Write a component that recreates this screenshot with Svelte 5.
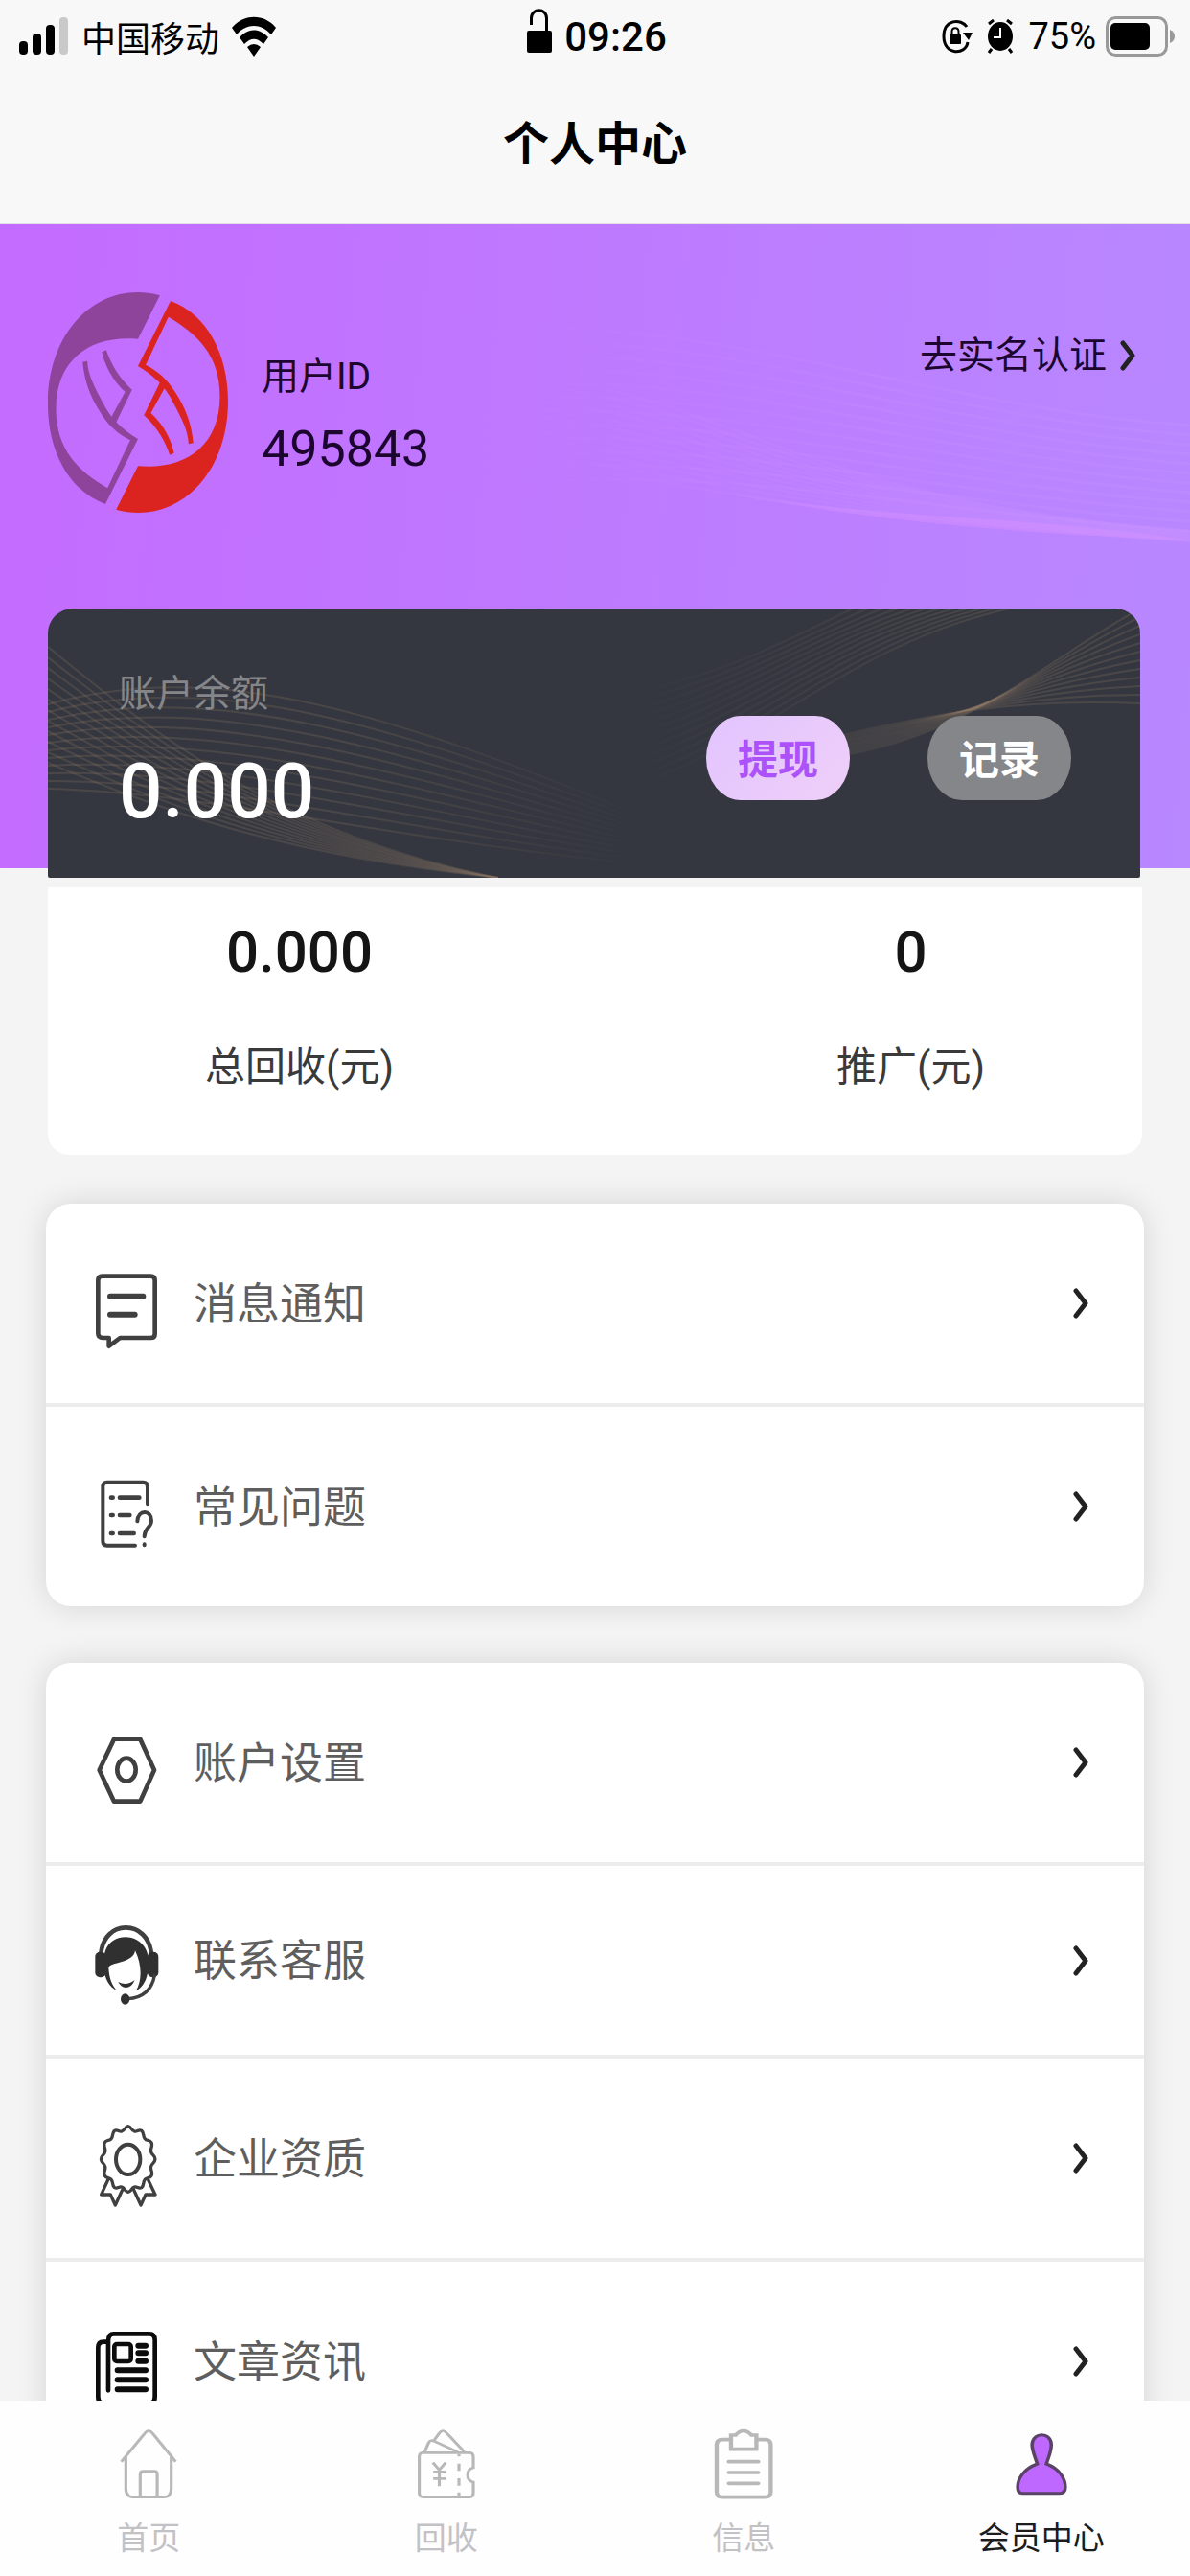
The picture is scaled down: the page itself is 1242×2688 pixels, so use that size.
<script>
	const notices = [
		{ icon: 'message', label: '消息通知', box: '174 252 204 264' },
		{ icon: 'faq', label: '常见问题', box: '174 888 204 264' }
	];

	const services = [
		{ icon: 'settings', label: '账户设置', box: '174 249 204 264' },
		{ icon: 'support', label: '联系客服', box: '174 866 204 264', compact: true },
		{ icon: 'badge', label: '企业资质', box: '174 286 204 264' },
		{ icon: 'news', label: '文章资讯', box: '174 921 204 264' }
	];

	const tabs = [
		{ icon: 'home', label: '首页', box: '315 135 152 216' },
		{ icon: 'ticket', label: '回收', box: '1101 135 152 216' },
		{ icon: 'list', label: '信息', box: '315 135 152 216' },
		{ icon: 'user', label: '会员中心', box: '1101 135 152 216' }
	];

	let active = $state('user');

	const lines = Array.from({ length: 12 }, (_, i) => i);

	// twelve bumps round an ellipse
	function scallop(cx, cy, rx, ry) {
		const at = (deg, r) => {
			const a = (deg * Math.PI) / 180;
			return `${(cx + Math.sin(a) * rx * r).toFixed(1)} ${(cy - Math.cos(a) * ry * r).toFixed(1)}`;
		};
		let d = `M${at(-15, 0.93)}`;
		for (let k = 0; k < 12; k++) {
			d += `C${at(k * 30 - 8, 0.93)} ${at(k * 30 - 7, 1.06)} ${at(k * 30, 1.06)}`;
			d += `C${at(k * 30 + 7, 1.06)} ${at(k * 30 + 8, 0.93)} ${at(k * 30 + 15, 0.93)}`;
		}
		return d + 'Z';
	}
</script>

{#snippet chevron()}
	<svg class="chevron" viewBox="0 0 16 32" aria-hidden="true">
		<path d="M3 3L13 16L3 29" />
	</svg>
{/snippet}

{#snippet menu(items)}
	<nav class="card menu">
		{#each items as item}
			<a href="#{item.icon}" class="row" class:compact={item.compact}>
				<svg class="row-icon" viewBox={item.box} aria-hidden="true">
					{#if item.icon === 'message'}
						<path class="line w14" d="M200 275H352Q365 275 365 288V455Q365 468 352 468H256L221 494V468H202Q187 468 187 453V288Q187 275 200 275Z" />
						<path class="line w18" d="M225 338H328M225 395H302" />
					{:else if item.icon === 'faq'}
						<path class="line w12" d="M342 988V936Q342 920 328 920H215Q202 920 202 934V1105Q202 1118 215 1118H303" />
						<path class="line w14" d="M228 968H233M255 968H316M228 1023H233M255 1023H286M228 1080H233M255 1080H299" />
						<path class="line w12" d="M310 1042C312 1005 354 1005 354 1040C354 1062 332 1062 332 1090M332 1114V1117" />
					{:else if item.icon === 'settings'}
						<path class="line w14" d="M237 284H319L363 381L319 479H237L191 381Z" />
						<ellipse class="line w14" cx="276" cy="380" rx="29" ry="36" />
					{:else if item.icon === 'support'}
						<path class="line w14" d="M196 955C202 842 346 842 354 955" />
						<rect x="178" y="946" width="34" height="80" rx="15" />
						<rect x="342" y="946" width="34" height="80" rx="15" />
						<path d="M206 965C208 878 336 878 344 965V1000C340 1035 328 1055 306 1068C324 1038 326 990 303 942C300 982 222 978 220 996C222 1030 230 1050 246 1068C222 1055 208 1030 206 1000Z" />
						<path d="M250 1040Q276 1054 302 1034Q292 1058 274 1058Q258 1057 250 1040Z" />
						<path class="line w10" d="M364 1020C355 1068 325 1090 280 1093" />
						<ellipse cx="272" cy="1094" rx="14" ry="17" />
					{:else if item.icon === 'badge'}
						<path class="line w10" d={scallop(281, 397, 80, 97)} />
						<ellipse class="line w12" cx="281" cy="398" rx="38" ry="47" />
						<path class="line w10" d="M219 460L197 508H226L241 541L264 491M343 460L366 508H336L321 541L298 491" />
					{:else if item.icon === 'news'}
						<g class="dark">
							<path class="line w14" d="M219 1120V965Q219 943 236 943H348Q365 943 365 962V1140Q365 1160 348 1160H204Q187 1160 187 1140V986Q187 968 204 968H215" />
							<rect class="line w14" x="238" y="975" width="52" height="54" rx="8" />
							<path class="line w18" d="M313 980H336M313 1003H336M313 1028H336M248 1057H336M248 1087H336M248 1117H336" />
						</g>
					{/if}
				</svg>
				<span>{item.label}</span>
				{@render chevron()}
			</a>
		{/each}
	</nav>
{/snippet}

<div class="app">
	<header>
		<div class="status">
			<div class="group">
				<svg class="signal" viewBox="0 0 52 42" aria-hidden="true">
					<rect x="0" y="26" width="9" height="14" rx="4" />
					<rect x="14" y="18" width="9" height="22" rx="4" />
					<rect x="28" y="9" width="9" height="31" rx="4" />
					<rect class="off" x="42" y="1" width="9" height="39" rx="4" />
				</svg>
				<span>中国移动</span>
				<svg class="wifi" viewBox="0 0 46 42" aria-hidden="true">
					<path d="M0 12C12 -3 34 -3 46 12L41 19C30 7 16 7 5 19Z" />
					<path d="M8 22C17 12 29 12 38 22L33 29C26 22 20 22 13 29Z" />
					<path d="M16 32Q23 26 30 32L23 42Z" />
				</svg>
			</div>
			<div class="group clock">
				<svg class="unlock" viewBox="0 0 26 46" aria-hidden="true">
					<rect x="0" y="23" width="26" height="23" rx="2" />
					<path d="M4.500 17V10C4.500 -1 20.500 -1 20.500 10V24" />
				</svg>
				<time>09:26</time>
			</div>
			<div class="group end">
				<svg class="rotation" viewBox="0 0 32 36" aria-hidden="true">
					<path class="ring" d="M26 8C20 -1 2 0 2 18C2 38 25 38 27 24" />
					<path d="M22 14H32L28 22Z" />
					<rect x="8" y="16" width="12" height="10" rx="1" />
					<path class="shackle" d="M10.500 17V13C10.500 8 17.500 8 17.500 13V17" />
				</svg>
				<svg class="alarm" viewBox="0 0 28 36" aria-hidden="true">
					<ellipse cx="14" cy="18" rx="13" ry="15" />
					<path class="legs" d="M2 5L7 1M26 5L21 1M5 31L2 35M23 31L26 35" />
					<path class="hands" d="M14 9V19H7" />
				</svg>
				<span>75%</span>
				<svg class="battery" viewBox="0 0 72 42" aria-hidden="true">
					<rect class="shell" x="1.500" y="1.500" width="62" height="39" rx="9" />
					<rect x="5" y="7" width="41" height="28" rx="5" />
					<path class="nub" d="M67 14Q72 16 72 21Q72 26 67 28Z" />
				</svg>
			</div>
		</div>
		<h1>个人中心</h1>
	</header>

	<main>
		<section class="hero">
			<svg class="hero-waves" viewBox="0 0 1242 672" preserveAspectRatio="none" aria-hidden="true">
				<path class="glow" d="M700 270C900 310 1050 300 1242 330C1050 322 900 310 700 270Z" />
				{#each lines as i}
					<path d="M480 {110 + i * 15}C740 {90 + i * 14} 960 {190 + i * 10} 1242 {210 + i * 10}" />
					<path d="M560 {160 + i * 8}C760 {180 + i * 9} 840 {290 + i} 1242 {320 + i}" />
				{/each}
			</svg>
			<div class="profile">
				<svg class="avatar" viewBox="112 222 420 696" preserveAspectRatio="none" role="img" aria-label="头像">
					<defs>
						<g id="half">
							<path d="M373 235C240 185 112 330 112 575C112 720 160 845 246 888L322 684C285 655 258 620 240 570C218 515 205 480 204 440L193 443C197 505 212 555 235 602C253 642 275 668 304 688L251 838C185 785 131 720 131 590C131 430 215 358 322 371Z" />
							<path d="M238 412L248 406C258 445 275 490 308 530L270 635L260 615L292 537C262 500 245 455 238 412Z" />
						</g>
					</defs>
					<use href="#half" fill="#8f449b" />
					<use href="#half" fill="#db2420" transform="rotate(180 322 570)" />
				</svg>
				<div class="who">
					<span>用户ID</span>
					<strong>495843</strong>
				</div>
				<a href="#verify" class="verify">去实名认证 {@render chevron()}</a>
			</div>

			<div class="balance">
				<svg class="balance-waves" viewBox="0 0 1140 281" preserveAspectRatio="none" aria-hidden="true">
					<defs>
						<linearGradient id="fade-right" gradientUnits="userSpaceOnUse" x1="0" y1="0" x2="620" y2="0">
							<stop offset="0.5" stop-color="#9a7f68" />
							<stop offset="1" stop-color="#9a7f68" stop-opacity="0" />
						</linearGradient>
						<linearGradient id="fade-left" gradientUnits="userSpaceOnUse" x1="600" y1="0" x2="1000" y2="0">
							<stop offset="0" stop-color="#9a7f68" stop-opacity="0" />
							<stop offset="1" stop-color="#9a7f68" />
						</linearGradient>
					</defs>
					<g stroke="url(#fade-right)">
						{#each lines as i}
							<path d="M0 {100 + i * 8}C180 {50 + i * 13} 360 {110 + i * 12} 640 {225 + i * 4}" />
							<path d="M0 {40 + i * 11}C110 {130 + i * 7} 240 {235 + i * 2} 470 281" />
						{/each}
					</g>
					<g stroke="url(#fade-left)">
						{#each lines as i}
							<path d="M600 {90 + i * 9}C{700 + i * 6} {70 + i * 6} {760 + i * 8} {40 - i * 2} {860 + i * 18} -10" />
							<path d="M760 {160 - i}C{940 - i * 3} {156 - i * 4} {1030 - i * 3} {60 + i * 3} 1140 {i * 9}" />
						{/each}
					</g>
				</svg>
				<div class="amount">
					<span>账户余额</span>
					<strong>0.000</strong>
				</div>
				<div class="actions">
					<button type="button" class="withdraw">提现</button>
					<button type="button">记录</button>
				</div>
			</div>
		</section>

		<dl class="stats">
			<div>
				<dt>总回收(元)</dt>
				<dd>0.000</dd>
			</div>
			<div>
				<dt>推广(元)</dt>
				<dd>0</dd>
			</div>
		</dl>

		{@render menu(notices)}
		{@render menu(services)}
	</main>

	<nav class="tabbar">
		{#each tabs as tab}
			<button type="button" class:active={active === tab.icon} onclick={() => (active = tab.icon)}>
				<svg viewBox={tab.box} preserveAspectRatio="none" aria-hidden="true">
					{#if tab.icon === 'home'}
						<path d="M319 236L380 149Q391 130 403 149L463 236M331 222V320Q331 347 354 347H430Q451 347 451 320V222M369 345V275Q369 266 378 266H406Q414 266 414 275V345" />
					{:else if tab.icon === 'ticket'}
						<path d="M1114 208H1238Q1248 208 1248 222V255Q1233 258 1233 278Q1233 296 1248 300V334Q1248 347 1238 347H1116Q1105 347 1105 334V222Q1105 208 1114 208Z" />
						<path d="M1119 206L1130 176Q1135 166 1145 172L1206 205M1145 168L1158 147Q1167 132 1178 147L1224 205" />
						<path d="M1141 239L1158 262L1175 239M1158 262V313M1142 268H1176M1142 289H1176" />
						<path d="M1210 212V220M1210 242V265M1210 288V311M1210 332V345" />
					{:else if tab.icon === 'list'}
						<g class="thick">
							<path d="M354 167H334Q320 167 320 184V331Q320 347 334 347H448Q463 347 463 331V184Q463 167 448 167H430" />
							<path d="M358 153H370Q391 126 412 153H425V197H358Z" />
							<path d="M352 236H430M352 270H430M352 304H430" />
						</g>
					{:else}
						<path class="person" d="M1166 243C1158 215 1152 200 1152 182C1154 142 1202 142 1203 182C1203 205 1196 220 1190 243C1225 258 1240 290 1240 315Q1240 335 1226 335H1126Q1114 335 1114 315C1114 290 1130 258 1166 243Z" />
					{/if}
				</svg>
				<span>{tab.label}</span>
			</button>
		{/each}
	</nav>
</div>

<style>
	:global(body) {
		background: #f4f4f4;
	}

	.app {
		display: flex;
		flex-direction: column;
		height: 100vh;
		overflow: hidden;
		background: #f4f4f4;
		font-family: Roboto, 'Noto Sans CJK SC', sans-serif;
		color: #111;
	}

	a {
		color: inherit;
		text-decoration: none;
	}

	button {
		border: 0;
		padding: 0;
		background: none;
		font-family: inherit;
		cursor: pointer;
	}

	header {
		flex: none;
		padding-bottom: 7px;
		background: #f8f8f8;
		border-bottom: 1px solid #e2dfe6;
	}

	.status {
		display: grid;
		grid-template-columns: 1fr auto 1fr;
		align-items: center;
		height: 76px;
		padding: 0 16px 0 20px;
		font-size: 36px;
		color: #000;
	}

	.group {
		display: flex;
		align-items: center;
		gap: 13px;
	}
	.clock {
		font-size: 42px;
		font-weight: 500;
	}
	.end {
		justify-content: flex-end;
		gap: 10px;
		font-size: 38px;
	}

	.signal {
		width: 52px;
		height: 42px;
	}
	.off {
		fill: #c9c9c9;
	}
	.wifi {
		width: 46px;
		height: 42px;
	}
	.unlock {
		width: 26px;
		height: 46px;
		margin-bottom: 12px;
	}
	.unlock path,
	.ring,
	.shackle,
	.legs {
		fill: none;
		stroke: #000;
		stroke-width: 3;
	}
	.shackle {
		stroke-width: 2;
	}
	.rotation {
		width: 32px;
		height: 36px;
	}
	.alarm {
		width: 28px;
		height: 36px;
		margin: 0 5px;
	}
	.hands {
		fill: none;
		stroke: #fff;
		stroke-width: 2;
	}
	.battery {
		width: 72px;
		height: 42px;
	}
	.shell {
		fill: none;
		stroke: #999;
		stroke-width: 3;
	}
	.nub {
		fill: #999;
	}

	h1 {
		margin: 0;
		font-size: 48px;
		font-weight: 700;
		line-height: 150px;
		text-align: center;
		color: #000;
	}

	main {
		flex: 1;
		min-height: 0;
		overflow-y: auto;
		scrollbar-width: none;
	}

	.hero {
		position: relative;
		display: flex;
		flex-direction: column;
		gap: 99px;
		padding: 70px 52px 0 50px;
		background: linear-gradient(95deg, #c46bff, #be7aff 50%, #b888ff);
	}

	.hero-waves,
	.balance-waves {
		position: absolute;
		inset: 0;
		width: 100%;
		height: 100%;
		fill: none;
	}
	.hero-waves {
		stroke: #d39cff;
		stroke-opacity: 0.14;
		stroke-width: 3;
		mask-image: linear-gradient(90deg, transparent 40%, #000 75%);
	}
	.glow {
		fill: #d08cff;
		fill-opacity: 0.6;
		stroke: none;
	}

	.profile {
		position: relative;
		display: flex;
		align-items: flex-start;
		font-size: 39px;
		line-height: 76px;
		color: #1c0630;
	}

	.avatar {
		width: 188px;
		height: 232px;
	}

	.who {
		display: flex;
		flex-direction: column;
		flex: 1;
		padding: 51px 0 0 35px;
	}
	.who strong {
		font-size: 52px;
		font-weight: 400;
	}

	.verify {
		display: flex;
		align-items: center;
		gap: 14px;
		padding: 29px 5px 0 0;
	}

	.chevron {
		width: 16px;
		height: 32px;
		fill: none;
		stroke: #222;
		stroke-width: 5;
		stroke-linecap: round;
		stroke-linejoin: round;
	}

	.balance {
		position: relative;
		display: flex;
		justify-content: space-between;
		align-items: center;
		margin-bottom: -10px;
		padding: 64px 72px 45px 74px;
		border-radius: 26px 26px 2px 2px;
		background: #34373f;
		overflow: hidden;
	}
	.balance-waves {
		stroke-opacity: 0.22;
		stroke-width: 2;
	}

	.amount {
		position: relative;
		display: flex;
		flex-direction: column;
		gap: 32px;
		font-size: 39px;
		line-height: 50px;
		color: #85868a;
	}
	.amount strong {
		font-size: 80px;
		font-weight: 500;
		line-height: 90px;
		color: #fff;
	}

	.actions {
		position: relative;
		display: flex;
		gap: 81px;
		margin-top: 12px;
	}
	.actions button {
		width: 150px;
		height: 88px;
		padding-bottom: 4px;
		border-radius: 36px / 44px;
		background: #85868a;
		font-size: 42px;
		font-weight: 700;
		color: #fff;
	}
	.actions .withdraw {
		background: linear-gradient(135deg, #e2c4ff, #efcff8);
		color: #ad52fa;
	}

	.stats {
		display: flex;
		justify-content: space-between;
		margin: 20px 50px 0;
		padding: 33px 164px 56px;
		border-radius: 0 0 22px 22px;
		background: #fff;
		text-align: center;
	}
	.stats div {
		display: flex;
		flex-direction: column-reverse;
		gap: 50px;
	}
	.stats dt {
		font-size: 42px;
		line-height: 70px;
		color: #3a3a3a;
	}
	.stats dd {
		margin: 0;
		font-size: 60px;
		font-weight: 500;
		line-height: 70px;
		color: #151515;
	}

	.menu {
		margin: 51px 48px 0;
		border-radius: 26px;
		background: #fff;
		box-shadow: 0 0 32px rgba(0, 0, 0, 0.13);
	}
	.menu + .menu {
		margin-top: 59px;
	}

	.row {
		display: flex;
		align-items: center;
		height: 208px;
		padding: 0 58px 0 50px;
		font-size: 45px;
		color: #5e5e5e;
	}
	.row + .row {
		border-top: 4px solid #ededed;
	}
	.row.compact {
		height: 197px;
	}
	.row span {
		flex: 1;
		padding-bottom: 6px;
	}

	.row-icon {
		width: 68px;
		height: 88px;
		margin: 16px 36px 0 0;
		overflow: visible;
		fill: #303030;
		stroke: #404040;
		stroke-width: 0;
	}
	.line {
		fill: none;
		stroke-linecap: round;
		stroke-linejoin: round;
	}
	.dark {
		stroke: #0c0c0c;
	}
	.w10 {
		stroke-width: 10;
	}
	.w12 {
		stroke-width: 12;
	}
	.w14 {
		stroke-width: 14;
	}
	.w18 {
		stroke-width: 18;
	}

	.tabbar {
		position: relative;
		display: flex;
		flex: none;
		background: #fefefe;
	}
	.tabbar button {
		display: flex;
		flex: 1 1 0;
		flex-direction: column;
		align-items: center;
		gap: 17px;
		padding: 30px 0 14px;
		font-size: 33px;
		line-height: 50px;
		color: #c2c2c6;
	}
	.tabbar .active {
		color: #1c1c1c;
	}
	.tabbar svg {
		width: 60px;
		height: 72px;
		fill: none;
		stroke: #b8b8b8;
		stroke-width: 8;
		overflow: visible;
	}
	.tabbar .thick {
		stroke-width: 11;
		stroke-linecap: round;
	}
	.tabbar .person {
		fill: #bf68ff;
		stroke: #594366;
		stroke-width: 9;
	}
</style>
